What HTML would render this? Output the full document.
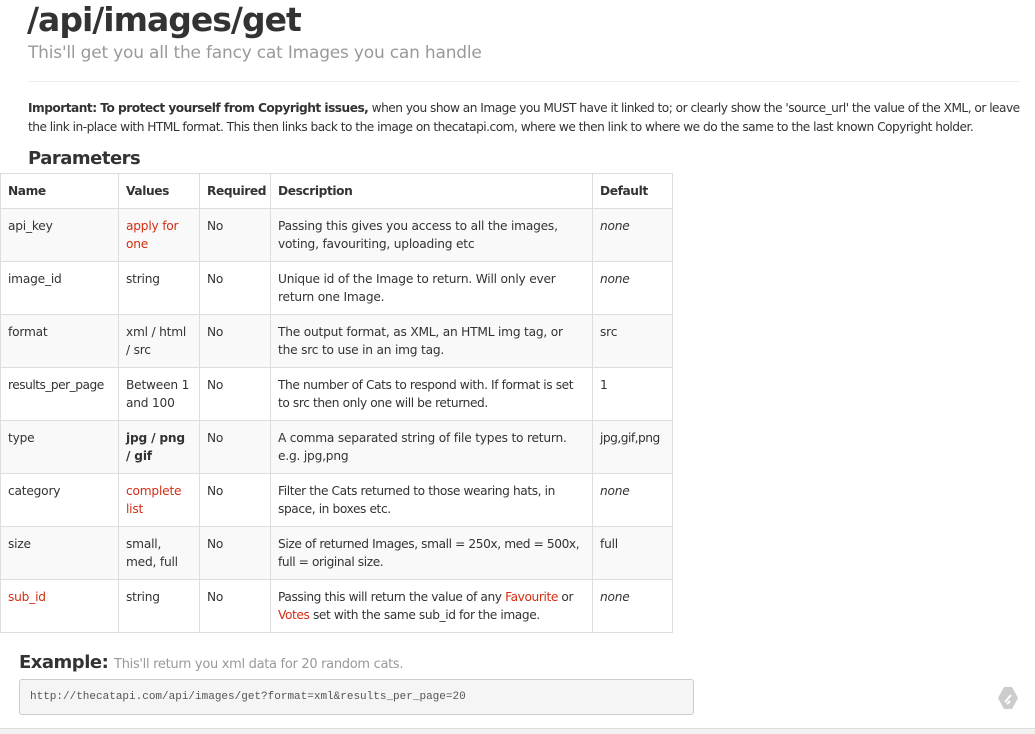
<!DOCTYPE html>
<html><head><style>
body{margin:0;width:1035px;height:733px;overflow:hidden;background:#fff;font-family:"DejaVu Sans","Liberation Sans",sans-serif;color:#333;position:relative}
.a{position:absolute}
h1{position:absolute;left:27px;top:0;margin:0;font-size:33px;font-weight:bold;color:#333;letter-spacing:-1px;line-height:40px}
.sub{left:28px;top:42px;font-size:17px;color:#999;line-height:22px;letter-spacing:-0.2px}
.hr{left:28px;top:81px;width:992px;height:1px;background:#eee}
.p{left:28px;top:99px;width:1010px;font-size:12.2px;line-height:19px;color:#333;letter-spacing:-0.52px;white-space:nowrap}
.ph{left:28px;top:147px;font-size:18px;font-weight:bold;line-height:24px;letter-spacing:-0.5px}
table{position:absolute;left:0;top:173px;border-collapse:collapse;font-size:12.2px;width:673px;table-layout:fixed;letter-spacing:-0.2px}
td,th{border:1px solid #ddd;padding:8px 7px;vertical-align:top;text-align:left;line-height:18px}
th{height:16px;padding:8px 7px;font-weight:bold;letter-spacing:-0.4px}
tr.g td{background:#f9f9f9}
td{height:34px}
.r{color:#d42e12}
i{font-style:italic}
.ex{left:19px;top:652px;font-size:18px;font-weight:bold;color:#333;letter-spacing:-0.5px}
.ex span{font-size:13px;font-weight:normal;color:#999;letter-spacing:-0.3px}
.code{left:19px;top:679px;border:1px solid #ccc;border-radius:3px;background:#f5f5f5;font-family:"Liberation Mono",monospace;font-size:11px;color:#555;line-height:35px;box-sizing:border-box;padding-left:10px;width:675px;height:36px}
.bot{left:0;top:728px;width:1035px;height:5px;background:#f2f2f2;border-top:1px solid #ddd}
</style></head><body>
<h1>/api/images/get</h1>
<div class="a sub">This'll get you all the fancy cat Images you can handle</div>
<div class="a hr"></div>
<div class="a p"><b>Important: To protect yourself from Copyright issues,</b> when you show an Image you MUST have it linked to; or clearly show the 'source_url' the value of the XML, or leave<br>the link in-place with HTML format. This then links back to the image on thecatapi.com, where we then link to where we do the same to the last known Copyright holder.</div>
<div class="a ph">Parameters</div>
<table>
<colgroup><col style="width:118px"><col style="width:81px"><col style="width:71px"><col style="width:322px"><col></colgroup>
<tr><th>Name</th><th>Values</th><th>Required</th><th>Description</th><th>Default</th></tr>
<tr class="g"><td>api_key</td><td class="r">apply for one</td><td>No</td><td>Passing this gives you access to all the images, voting, favouriting, uploading etc</td><td><i>none</i></td></tr>
<tr><td>image_id</td><td>string</td><td>No</td><td>Unique id of the Image to return. Will only ever return one Image.</td><td><i>none</i></td></tr>
<tr class="g"><td>format</td><td>xml / html / src</td><td>No</td><td>The output format, as XML, an HTML img tag, or the src to use in an img tag.</td><td>src</td></tr>
<tr><td style="white-space:nowrap;letter-spacing:-0.5px">results_per_page</td><td>Between 1 and 100</td><td>No</td><td style="letter-spacing:-0.4px">The number of Cats to respond with. If format is set to src then only one will be returned.</td><td>1</td></tr>
<tr class="g"><td>type</td><td><b>jpg / png / gif</b></td><td>No</td><td>A comma separated string of file types to return. e.g. jpg,png</td><td style="letter-spacing:-0.5px">jpg,gif,png</td></tr>
<tr><td>category</td><td class="r">complete list</td><td>No</td><td style="letter-spacing:-0.4px">Filter the Cats returned to those wearing hats, in space, in boxes etc.</td><td><i>none</i></td></tr>
<tr class="g"><td>size</td><td>small, med, full</td><td>No</td><td style="letter-spacing:-0.4px">Size of returned Images, small = 250x, med = 500x, full = original size.</td><td>full</td></tr>
<tr><td class="r">sub_id</td><td>string</td><td>No</td><td style="letter-spacing:-0.4px">Passing this will return the value of any <span class="r">Favourite</span> or <span class="r">Votes</span> set with the same sub_id for the image.</td><td><i>none</i></td></tr>
</table>
<div class="a ex">Example: <span>This'll return you xml data for 20 random cats.</span></div>
<div class="a code">http://thecatapi.com/api/images/get?format=xml&amp;results_per_page=20</div>
<svg class="a" style="left:996px;top:686px" width="24" height="24" viewBox="0 0 24 24"><path d="M8 1h8l6 11-6 11H8L2 12z" fill="#ccc"/><path d="M9 16l6-7M11 18l3-3" stroke="#fff" stroke-width="2"/></svg>
<div class="a bot"></div>
</body></html>
